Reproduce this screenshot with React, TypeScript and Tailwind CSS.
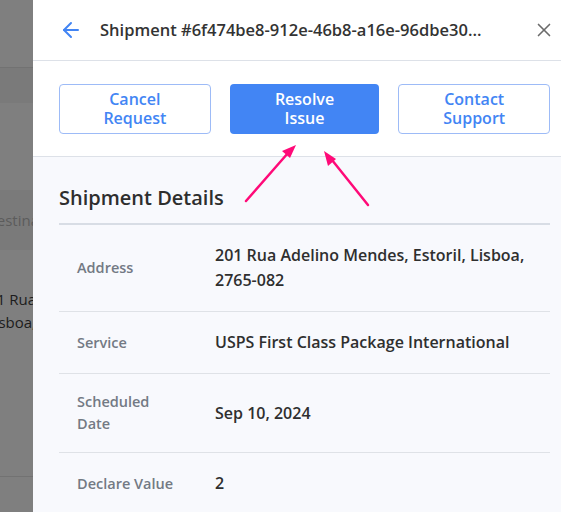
import React from 'react';
import { ArrowLeft, X } from 'lucide-react';

const rows = [
  { label: 'Address', value: '201 Rua Adelino Mendes, Estoril, Lisboa, 2765-082', pad: 'py-[18px]' },
  { label: 'Service', value: 'USPS First Class Package International', pad: 'py-[18px]' },
  { label: 'Scheduled Date', value: 'Sep 10, 2024', pad: 'py-[17px]' },
  { label: 'Declare Value', value: '2', pad: 'py-[18px]' },
];

const Backdrop: React.FC = () => (
  <div className="w-[33px] shrink-0 h-full overflow-hidden bg-[#7f7f7f] flex flex-col">
    <div className="h-[68px] border-b border-[#727272]" />
    <div className="h-[35px] bg-[#7a7a7a]" />
    <div className="h-[87px]" />
    <div className="h-[60px] bg-[#7a7a7a] flex items-center justify-end whitespace-nowrap text-[15px] text-[#5c5c5c]">
      <span className="-mr-[6px]">Destina</span>
    </div>
    <div className="pt-[38px] flex flex-col items-end whitespace-nowrap text-[15px] leading-[23px] text-[#1c1c1c]">
      <span className="-mr-[3px]">201 Rua</span>
      <span className="-mr-[3px]">Lisboa,</span>
    </div>
    <div className="mt-[142px] border-t border-[#727272]" />
  </div>
);

const Annotations: React.FC = () => (
  <svg className="absolute inset-0 pointer-events-none" width="561" height="512" viewBox="0 0 561 512">
    <g stroke="#ff0a78" strokeWidth="2.5" fill="#ff0a78" strokeLinecap="round">
      <line x1="246" y1="201" x2="288" y2="153" />
      <polygon points="296,145 282,151 290,158" stroke="none" />
      <line x1="368" y1="205" x2="332" y2="160" />
      <polygon points="324,151 328,166 336,159" stroke="none" />
    </g>
  </svg>
);

export default function App() {
  return (
    <div
      className="relative w-[561px] h-[512px] overflow-hidden flex bg-white"
      style={{ fontFamily: '"Open Sans", "Noto Sans", sans-serif' }}
    >
      <Backdrop />

      <div className="flex-1 h-full flex flex-col bg-white">
        {/* header */}
        <div className="h-[61px] shrink-0 flex items-center border-b border-[#dde1e8] pl-[26px] pr-[6px]">
          <ArrowLeft className="w-[24px] h-[24px] text-[#4285f4]" strokeWidth={2} />
          <h2 className="ml-[17px] flex-1 text-[16.5px] font-semibold text-[#333] whitespace-nowrap">
            Shipment #6f474be8-912e-46b8-a16e-96dbe30...
          </h2>
          <X className="w-[22px] h-[22px] text-[#6b6b6b]" strokeWidth={1.8} />
        </div>

        {/* actions */}
        <div className="h-[96px] shrink-0 flex items-center gap-[19px] border-b border-[#dde1e8] pl-[26px] pr-[11px]">
          <button className="flex-1 h-[50px] rounded-[4px] border border-[#9dbbf7] bg-white text-[#4285f4] text-[16px] font-semibold leading-[19px]">
            Cancel<br />Request
          </button>
          <button className="flex-1 h-[50px] rounded-[4px] bg-[#4285f4] text-white text-[16px] font-semibold leading-[19px]">
            Resolve<br />Issue
          </button>
          <button className="flex-1 h-[50px] rounded-[4px] border border-[#9dbbf7] bg-white text-[#4285f4] text-[16px] font-semibold leading-[19px]">
            Contact<br />Support
          </button>
        </div>

        {/* details */}
        <div className="flex-1 bg-[#f8f9fd] pl-[26px] pr-[11px]">
          <h3 className="pt-[27px] pb-[11px] text-[20px] font-semibold text-[#2e2e2e] leading-[28px]">
            Shipment Details
          </h3>
          <div className="border-t-2 border-[#d8dde5]">
            {rows.map((r) => (
              <div
                key={r.label}
                className={`grid grid-cols-[156px_1fr] items-center border-b border-[#dfe2e7] ${r.pad}`}
              >
                <div className="pl-[18px] pr-[36px] text-[14.5px] font-semibold text-[#737a84] leading-[22px]">
                  {r.label}
                </div>
                <div className="text-[16px] font-semibold text-[#2f2f2f] leading-[25px]">{r.value}</div>
              </div>
            ))}
          </div>
        </div>
      </div>

      <Annotations />
    </div>
  );
}
